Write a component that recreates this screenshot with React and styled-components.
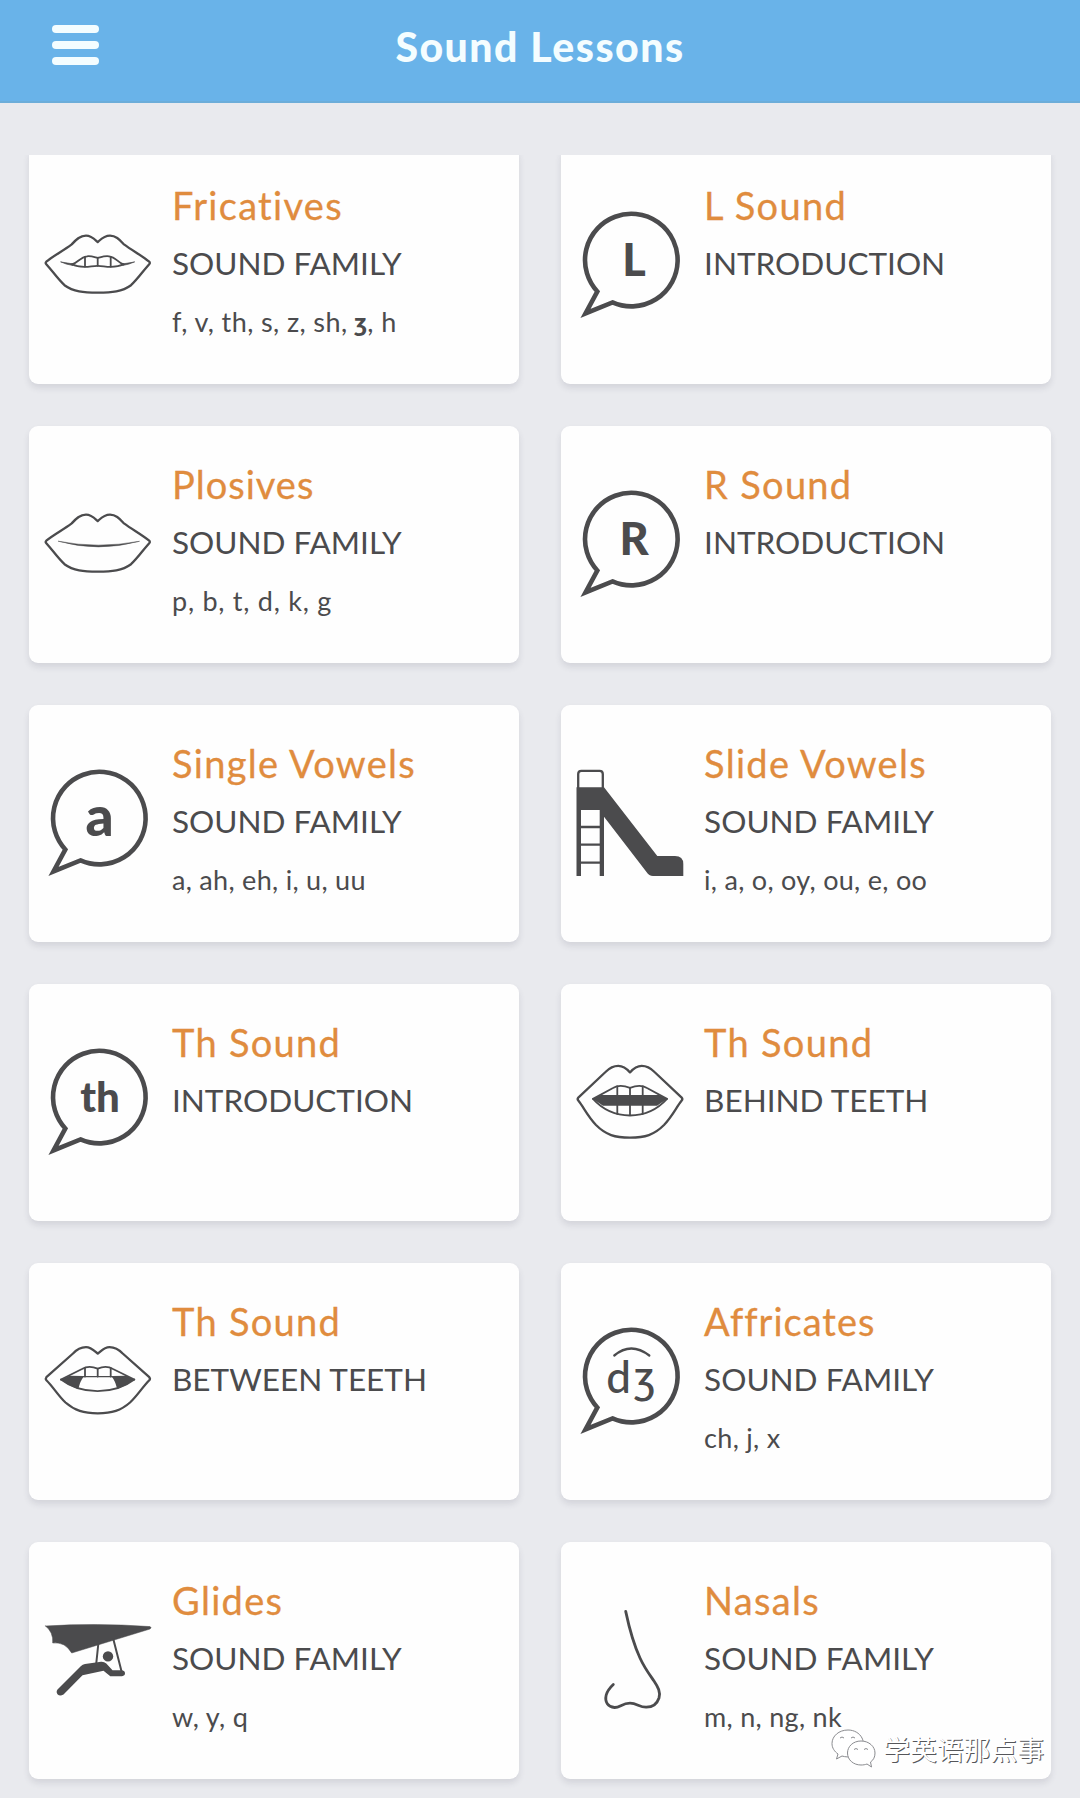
import React from "react";
import styled, { createGlobalStyle } from "styled-components";

const INK = "#4b4b4d";

const GlobalStyle = createGlobalStyle`
  * {
    box-sizing: border-box;
  }

  body {
    margin: 0;
    background: #e9eaee;
    font-family: Lato, "Noto Sans", sans-serif;
  }
`;

const Screen = styled.div`
  position: relative;
  width: 1080px;
  height: 1798px;
  overflow: hidden;
  background: #e9eaee;
`;

const Header = styled.header`
  display: grid;
  grid-template-columns: 152px 1fr 152px;
  align-items: center;
  height: 103px;
  padding-bottom: 7px;
  background: #69b3e9;
  border-bottom: 2px solid #6cadd9;
`;

const MenuButton = styled.button`
  display: flex;
  flex-direction: column;
  gap: 8px;
  width: 47px;
  margin: -4px 0 0 52px;
  padding: 0;
  border: none;
  background: none;
`;

const MenuBar = styled.span`
  height: 8px;
  border-radius: 4px;
  background: #f4fdff;
`;

const HeaderTitle = styled.h1`
  margin: 0;
  text-align: center;
  color: #f4fdff;
  font-size: 41px;
  line-height: 50px;
  font-weight: 900;
  letter-spacing: 1.5px;
`;

// Scroll area, the first row is slightly scrolled under its top edge
const Lessons = styled.main`
  margin-top: 51.5px;
  height: 1643.5px;
  overflow: hidden;
`;

const Grid = styled.div`
  display: grid;
  grid-template-columns: 490px 490px;
  grid-auto-rows: 237px;
  gap: 42.1px;
  margin: -8px 0 0 29px;
`;

const Card = styled.article`
  display: flex;
  align-items: center;
  padding-left: 15px;
  border-radius: 9px;
  background: #fefefe;
  box-shadow: 0 4px 6px rgba(60, 60, 80, 0.12);
`;

const Icon = styled.svg`
  flex: none;
  width: 108px;
  height: 108px;
  margin-right: 20px;
  overflow: visible;
  fill: none;
  stroke: ${INK};
  stroke-width: 2.3;
  stroke-linejoin: round;
  stroke-linecap: round;
`;

const IconText = styled.text`
  fill: ${INK};
  stroke: none;
  text-anchor: middle;
  font-family: Lato, "Noto Sans", sans-serif;
  font-weight: ${(p) => p.$weight || 900};
  font-size: ${(p) => p.$size}px;
`;

const Info = styled.div`
  align-self: flex-start;
  padding-top: 29.5px;
  white-space: nowrap;
  color: ${INK};
`;

const Title = styled.h2`
  margin: 0;
  color: #e08c3e;
  font-size: 38px;
  line-height: 58px;
  font-weight: 400;
  letter-spacing: ${(p) => p.$spacing || 1.3}px;
  -webkit-text-stroke: 0.3px #e08c3e;
`;

const Subtitle = styled.p`
  margin: 0;
  font-size: 31.5px;
  line-height: 58px;
`;

const Sounds = styled.p`
  margin: 1px 0 0;
  font-size: 27px;
  line-height: 58px;
  letter-spacing: ${(p) => p.$spacing || 0.3}px;

  b {
    font-weight: 900;
    line-height: 1;
  }
`;

const Watermark = styled.div`
  position: absolute;
  right: 36px;
  bottom: 29px;
  display: flex;
  align-items: center;
  gap: 6px;
  color: #fff;
  font-family: "Noto Sans CJK SC", sans-serif;
  font-size: 26.8px;
  line-height: 40px;
  text-shadow: 1px 1px 0 #55565a;
`;

const WeChatIcon = styled.svg`
  width: 46px;
  height: 40px;
  fill: #fff;
  stroke: #8a8b8f;
  stroke-width: 1;
`;

const ClosedLips = () => (
  <path d="M2.300 50.700 C9.500 44.700 19 40 27.700 33.400 C32 28.700 36 24.700 42 24.700 C47.500 24.700 50.500 28.200 53.700 31.100 C57 28.200 60 24.700 66 24.700 C72 24.700 75.500 28.700 80 33.400 C89 40 98 44.700 105.200 50.700 Q106.500 51.900 105.200 53.200 C98.500 60.700 94 67.700 87 74.200 C78 80.700 68 81.700 53.700 81.700 C39.500 81.700 29.500 80.700 20.500 74.200 C13.500 67.700 9 60.700 2.300 53.200 Q1.100 51.900 2.300 50.700Z" />
);

const OpenLips = () => (
  <path d="M2.400 50.200 L29 26.500 C33 22 37 20.100 42 20.100 C47 20.100 50 23.500 53.800 26.600 C57.700 23.500 60.500 20.100 65.500 20.100 C70.500 20.100 74.500 22 78.700 26.500 L105.300 50.200 Q106.600 51.700 105.300 53.200 C98.500 60 93.500 68.500 86 75.500 C77 83.500 68 86.300 53.800 86.300 C39.500 86.300 30.700 83.500 21.500 75.500 C14 68.500 9.300 60 2.400 53.200 Q1.200 51.700 2.400 50.200Z" />
);

const FricativeIcon = () => (
  <Icon viewBox="0 0 108 108">
    <ClosedLips />
    <g strokeWidth="1.800">
      <path d="M28 53.300 C34 52 36 46 43 45.300 C47 44.800 50 46 53.700 46.900 C57.500 46 60 44.800 65 45.300 C72 46 74 52 79.500 53.300" />
      <path d="M28 53.300 C38 58.500 47 54.600 53.700 54.800 C60 54.600 69 58.500 79.500 53.300" />
      <path d="M41 46 V55.500 M53.700 47 V54.800 M66.700 46 V55.500" />
    </g>
    <path
      d="M17 51 Q24 52.200 30 53 L29 54.500 Q22 53.500 17 51Z M90.300 51 Q84 52.200 77.500 53 L78.500 54.500 Q85 53.500 90.300 51Z"
      strokeWidth="0.700"
      fill={INK}
    />
  </Icon>
);

const PlosiveIcon = () => (
  <Icon viewBox="0 0 108 108">
    <ClosedLips />
    <path
      d="M14.500 51.300 Q54 62.500 95.500 51.300 Q54 59 14.500 51.300Z"
      strokeWidth="0.500"
      fill={INK}
    />
  </Icon>
);

const BehindTeethIcon = () => (
  <Icon viewBox="0 0 108 108">
    <path d="M2.300 49.600 L29.500 24 C33.500 20 37 17.900 42.300 17.900 C48 17.900 51 21 54 24.400 C57 21 60 17.900 65.700 17.900 C71 17.900 74.500 20 78.500 24 L105.700 49.600 Q107 51.100 105.700 52.600 C100.500 59 96.500 68 88 77 C78 87 69 89.600 54 89.600 C39 89.600 30 87 20 77 C11.500 68 7.500 59 2.300 52.600 Q1 51.100 2.300 49.600Z" />
    <path
      d="M17 50.900 L25 46.900 H83 L91 50.900 L81 57.800 H27Z"
      fill={INK}
      stroke="none"
    />
    <g strokeWidth="1.800">
      <path d="M17 50.900 L37 40 C42 36.800 47 37 54 39.900 C61 37 66 36.800 71 40 L91 50.900" />
      <path d="M17 50.900 C37 73 71 73 91 50.900" />
      <path d="M41.300 38.500 V66 M54 40 V67 M66.700 38.500 V66" />
    </g>
  </Icon>
);

const BetweenTeethIcon = () => (
  <Icon viewBox="0 0 108 108">
    <OpenLips />
    <path
      d="M17 52.500 L24.500 49.200 L40 49.500 C37 53 36 56 34.300 62 Q25 59 17 52.500Z M90.300 52.500 L83 49.200 L67.500 49.500 C70.500 53 71.500 56 73.300 62 Q82 59 90.300 52.500Z"
      fill={INK}
      stroke="none"
    />
    <g strokeWidth="1.800">
      <path d="M17 52.500 L38 42 C43 39 47 39 53.700 41.600 C60 39 64 39 69 42 L90.300 52.500" />
      <path d="M17 52.500 C37 68 70 68 90.300 52.500" />
      <path d="M25 49.300 Q54 50 82.500 49.300" strokeWidth="1.200" />
      <path d="M41 41 V49.500 M53.700 42 V49.500 M66.700 41 V49.500" />
    </g>
  </Icon>
);

const Bubble = ({ children }) => (
  <Icon viewBox="0 0 108 108">
    <path
      d="M21.300 80.500 A46.300 46.300 0 1 1 36.500 91.400 L9.500 102.500 Z"
      strokeWidth="4.600"
      strokeLinejoin="miter"
      strokeMiterlimit="10"
    />
    {children}
  </Icon>
);

const SlideIcon = () => (
  <Icon viewBox="0 0 108 108">
    <path d="M2.200 22 V5 Q2.200 1.800 5.400 1.800 H23.600 Q26.800 1.800 26.800 5 V22" strokeLinecap="butt" />
    <path
      d="M0.500 18.300 H28 L81.300 87 H99 Q107.300 87 107.300 95 V107 H77 Q73 107 70.500 103 L28 47.700 V107 H23.700 V41 H5 V107 H0.500Z"
      fill={INK}
      stroke="none"
    />
    <path d="M4 58 H25 M4 75.700 H25 M4 93.700 H25" />
  </Icon>
);

const GliderIcon = () => (
  <Icon viewBox="0 0 108 108">
    <path
      d="M1.500 20 Q54 16.800 106 20.600 Q108 21.500 106 23 L27.700 47 Q21 35.500 8.700 37 Q9.500 26 1.500 20Z"
      fill={INK}
      strokeWidth="0.500"
    />
    <path d="M54.300 38 L52.300 57 M69.300 33 L77.700 66" strokeWidth="2" />
    <circle cx="64" cy="50.400" r="5.200" fill={INK} stroke="none" />
    <path
      d="M13.500 83.500 L37 60 Q38.500 58.500 41 58 L57 55.800 Q60 55.500 62.300 57.500 L68.500 64.200 H78 Q81 64.800 81 67.300 Q81 69.900 78 70.200 H66.300 L59.500 64.700 L38.500 69.300 L19.500 88.500 Q16 90.500 13.700 88.500 Q11.700 86 13.500 83.500Z"
      fill={INK}
      stroke="none"
    />
  </Icon>
);

const NoseIcon = () => (
  <Icon viewBox="0 0 108 108">
    <path
      d="M49.700 5.400 C53 21 57.500 38 64 52 C68.500 62 73.500 68.500 78 75 C82 81 84.800 86 83 92 C80.500 99.500 76 101.300 70 101.200 C63 101 61 97.200 54 97.200 C46 97.200 44 101.700 38.500 101.500 C32 101 28.500 96 30.200 89 C31.500 84 34 81.500 37.300 78.400"
      strokeWidth="2.800"
    />
  </Icon>
);

const lessons = [
  {
    title: "Fricatives",
    subtitle: "SOUND FAMILY",
    sounds: (
      <>
        f, v, th, s, z, sh, <b>ʒ</b>, h
      </>
    ),
    soundsSpacing: 0.4,
    icon: <FricativeIcon />,
  },
  {
    title: "L Sound",
    subtitle: "INTRODUCTION",
    icon: (
      <Bubble>
        <IconText x="58" y="64.500" $size={45}>L</IconText>
      </Bubble>
    ),
  },
  {
    title: "Plosives",
    titleSpacing: 1,
    subtitle: "SOUND FAMILY",
    sounds: "p, b, t, d, k, g",
    soundsSpacing: 0.75,
    icon: <PlosiveIcon />,
  },
  {
    title: "R Sound",
    subtitle: "INTRODUCTION",
    icon: (
      <Bubble>
        <IconText x="58" y="64.500" $size={45}>R</IconText>
      </Bubble>
    ),
  },
  {
    title: "Single Vowels",
    subtitle: "SOUND FAMILY",
    sounds: "a, ah, eh, i, u, uu",
    icon: (
      <Bubble>
        <IconText x="55.500" y="66.500" $size={55}>a</IconText>
      </Bubble>
    ),
  },
  {
    title: "Slide Vowels",
    subtitle: "SOUND FAMILY",
    sounds: "i, a, o, oy, ou, e, oo",
    icon: <SlideIcon />,
  },
  {
    title: "Th Sound",
    subtitle: "INTRODUCTION",
    icon: (
      <Bubble>
        <IconText x="56" y="63.500" $size={42}>th</IconText>
      </Bubble>
    ),
  },
  {
    title: "Th Sound",
    subtitle: "BEHIND TEETH",
    icon: <BehindTeethIcon />,
  },
  {
    title: "Th Sound",
    subtitle: "BETWEEN TEETH",
    icon: <BetweenTeethIcon />,
  },
  {
    title: "Affricates",
    titleSpacing: 1,
    subtitle: "SOUND FAMILY",
    sounds: "ch, j, x",
    icon: (
      <Bubble>
        <path d="M38.300 28.500 Q55 14.500 73.300 28.500" />
        <IconText x="42.500" y="66" $size={44} $weight={500}>d</IconText>
        <IconText x="69" y="66" $size={46} $weight={500}>ʒ</IconText>
      </Bubble>
    ),
  },
  {
    title: "Glides",
    subtitle: "SOUND FAMILY",
    sounds: "w, y, q",
    icon: <GliderIcon />,
  },
  {
    title: "Nasals",
    subtitle: "SOUND FAMILY",
    sounds: "m, n, ng, nk",
    icon: <NoseIcon />,
  },
];

const App = () => (
  <>
    <GlobalStyle />
    <Screen>
      <Header>
        <MenuButton aria-label="Menu">
          <MenuBar />
          <MenuBar />
          <MenuBar />
        </MenuButton>
        <HeaderTitle>Sound Lessons</HeaderTitle>
      </Header>
      <Lessons>
        <Grid>
          {lessons.map((lesson, i) => (
            <Card key={i}>
              {lesson.icon}
              <Info>
                <Title $spacing={lesson.titleSpacing}>{lesson.title}</Title>
                <Subtitle>{lesson.subtitle}</Subtitle>
                {lesson.sounds && (
                  <Sounds $spacing={lesson.soundsSpacing}>{lesson.sounds}</Sounds>
                )}
              </Info>
            </Card>
          ))}
        </Grid>
      </Lessons>
      <Watermark>
        <WeChatIcon viewBox="0 0 46 40">
          <path d="M17 1 C8 1 1 7 1 14.500 C1 19 3.500 22.500 7 25 L5.500 30 L11 27 C14 28 19 28.300 22 27.500 C33 26 34 15 31 9 C28.500 4 23 1 17 1Z" />
          <path d="M30 12 C22 12 16.500 17.500 16.500 24 C16.500 31 22.500 36 30 36 C32.500 36 34 35.700 36 35 L40.500 38 L39.500 33 C42.500 31 44 28 44 24 C44 17.500 38 12 30 12Z" />
          <path d="M9 9 q2 -2 4 0 M20 9 q2 -2 4 0 M23 20.500 q2 -2 4 0 M33 20.500 q2 -2 4 0" />
        </WeChatIcon>
        <span>学英语那点事</span>
      </Watermark>
    </Screen>
  </>
);

export default App;
